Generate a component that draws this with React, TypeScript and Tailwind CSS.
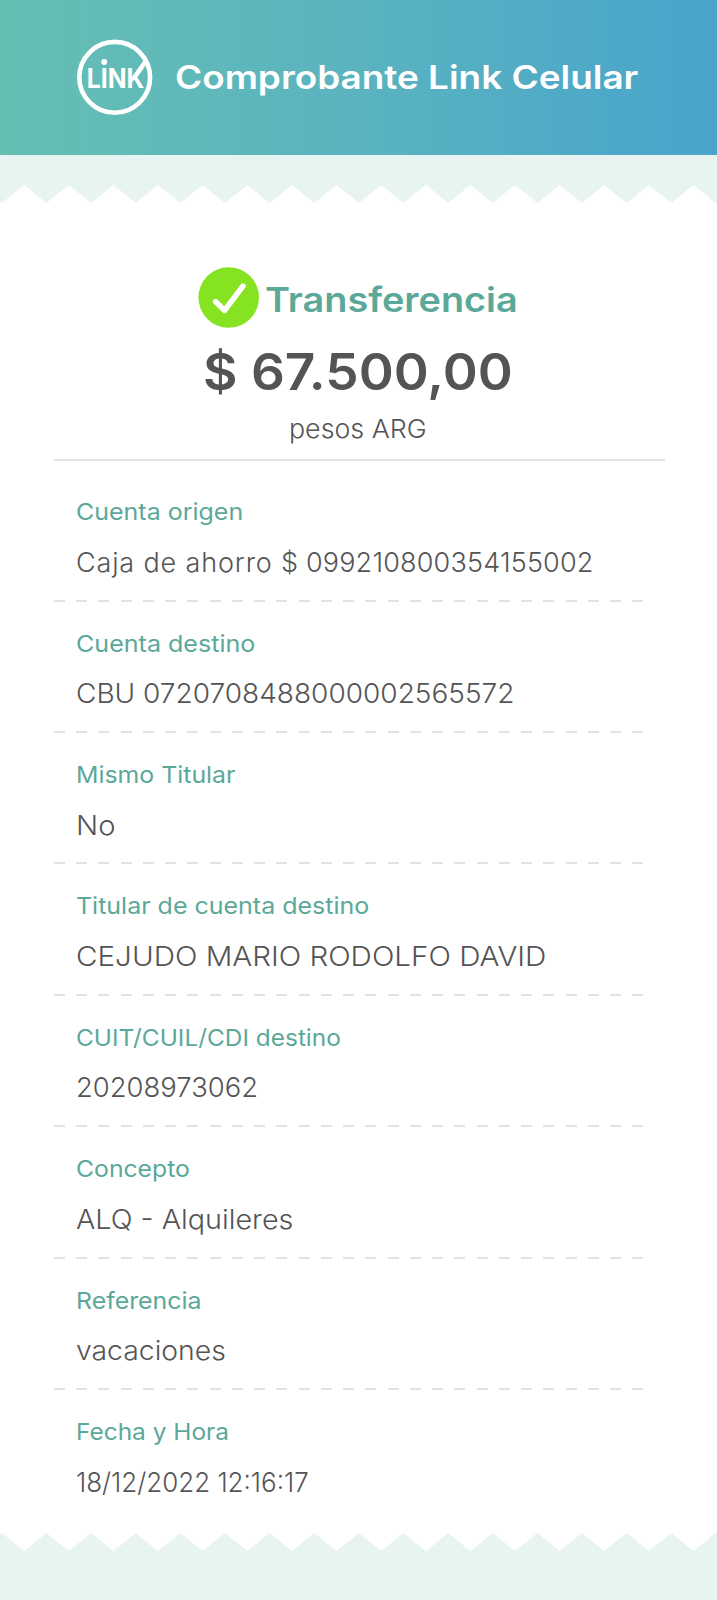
import type { ReactNode } from 'react';

type Row = {
  label: string;
  value: ReactNode;
  labelClass: string;
  valueClass: string;
};

const rows: Row[] = [
  {
    label: 'Cuenta origen',
    value: (
      <>
        <span className="tracking-[0.85px]">Caja de ahorro $ </span>
        <span className="-ml-[1.5px] tracking-[0.18px]">099210800354155002</span>
      </>
    ),
    labelClass: 'scale-x-[1.086]',
    valueClass: '',
  },
  { label: 'Cuenta destino', value: 'CBU 0720708488000002565572', labelClass: 'scale-x-[1.09]', valueClass: 'scale-x-[1.038]' },
  { label: 'Mismo Titular', value: 'No', labelClass: 'scale-x-[1.08]', valueClass: 'scale-x-[1.08]' },
  { label: 'Titular de cuenta destino', value: 'CEJUDO MARIO RODOLFO DAVID', labelClass: 'scale-x-[1.086]', valueClass: 'scale-x-[1.095]' },
  { label: 'CUIT/CUIL/CDI destino', value: '20208973062', labelClass: 'scale-x-[1.061]', valueClass: 'scale-x-[1.016]' },
  { label: 'Concepto', value: 'ALQ - Alquileres', labelClass: 'scale-x-[1.075]', valueClass: 'scale-x-[1.064]' },
  { label: 'Referencia', value: 'vacaciones', labelClass: 'scale-x-[1.082]', valueClass: 'scale-x-[1.05]' },
  { label: 'Fecha y Hora', value: '18/12/2022 12:16:17', labelClass: 'scale-x-[1.062]', valueClass: 'scale-x-[0.961]' },
];

function LinkLogo() {
  return (
    <svg width="76" height="76" viewBox="0 0 76 76" className="mb-[2px] flex-shrink-0" aria-label="Link">
      <circle cx="37.7" cy="38.3" r="35.4" fill="none" stroke="#fff" strokeWidth="4.6" />
      <text
        x="9.8"
        y="49"
        textLength="57.5"
        lengthAdjust="spacingAndGlyphs"
        fill="#fff"
        className="font-['Inter'] text-[27px] font-bold"
      >
        LINK
      </text>
      <circle cx="27.2" cy="23" r="3" fill="#fff" />
      {/* arm of the K reaching the ring */}
      <path d="M57 39 L68.5 22.5" stroke="#fff" strokeWidth="4.6" fill="none" />
    </svg>
  );
}

// White paper teeth; flipped for the bottom edge
function ZigZag({ flip = false }: { flip?: boolean }) {
  const id = flip ? 'teeth-bottom' : 'teeth-top';
  return (
    <svg width="717" height="18" className={flip ? 'block -scale-y-100' : 'block'} aria-hidden="true">
      <defs>
        <pattern id={id} x="1.9" width="44.62" height="18" patternUnits="userSpaceOnUse">
          <path d="M0 18 L22.31 0 L44.62 18 Z" fill="#fff" />
        </pattern>
      </defs>
      <rect width="717" height="18" fill={`url(#${id})`} />
    </svg>
  );
}

export default function App() {
  return (
    <div className="flex h-[1600px] w-[717px] flex-col overflow-hidden bg-[#e8f4f2] font-['Inter',sans-serif] text-[#545456]">
      {/* Header */}
      <header className="flex h-[155px] flex-shrink-0 items-center gap-[22px] bg-linear-to-r from-[#66bfb2] via-[#5ab3bf] to-[#49a4cc] pl-[77px]">
        <LinkLogo />
        <h1 className="mb-[2px] origin-left scale-x-[1.118] text-[33px] leading-[40px] font-semibold whitespace-nowrap text-white">
          Comprobante Link Celular
        </h1>
      </header>

      <div className="pt-[30px]">
        <ZigZag />
      </div>

      <main className="h-[1330px] flex-shrink-0 bg-white px-[54px] pt-[64px]">
        {/* Amount */}
        <section className="w-[611px] border-b-2 border-[#e2e2e2]">
          <div className="flex h-[61px] items-center gap-[6px] pl-[144px]">
            <svg width="61" height="61" viewBox="0 0 61 61" className="flex-shrink-0" aria-hidden="true">
              <circle cx="30.7" cy="30.5" r="30.3" fill="#85e322" />
              <path
                d="M17.5 34.5 L26.5 43.5 L45 19"
                fill="none"
                stroke="#fff"
                strokeWidth="5.4"
                strokeLinecap="round"
                strokeLinejoin="round"
              />
            </svg>
            <h2 className="mt-[4px] origin-left scale-x-[1.113] text-[34px] leading-[40px] font-semibold text-[#5ba899]">
              Transferencia
            </h2>
          </div>
          <p className="mt-[14px] ml-[149px] w-max origin-left scale-x-[1.041] text-[51px] leading-[60px] font-semibold">
            $ 67.500,00
          </p>
          <p className="mt-[9px] ml-[235px] w-max origin-left scale-x-[1.03] text-[26px] leading-[36px] font-light">
            pesos ARG
          </p>
          <div className="h-[12px]" />
        </section>

        {/* Details */}
        <dl className="mt-[8.8px]">
          {rows.map((row, i) => (
            <div key={row.label} className="h-[131.4px] pt-[28.4px]">
              <dt className={`ml-[22px] w-max origin-left text-[23px] leading-[28px] font-normal text-[#5ba899] ${row.labelClass}`}>
                {row.label}
              </dt>
              <dd className={`mt-[18.7px] ml-[22px] w-max origin-left text-[27px] leading-[36px] font-light ${row.valueClass}`}>
                {row.value}
              </dd>
              {i < rows.length - 1 && (
                <div className="mt-[18.8px] h-[2px] w-[590px] bg-[repeating-linear-gradient(to_right,#e2e2e2_0_11px,transparent_11px_22.24px)]" />
              )}
            </div>
          ))}
        </dl>
      </main>

      <ZigZag flip />
    </div>
  );
}
